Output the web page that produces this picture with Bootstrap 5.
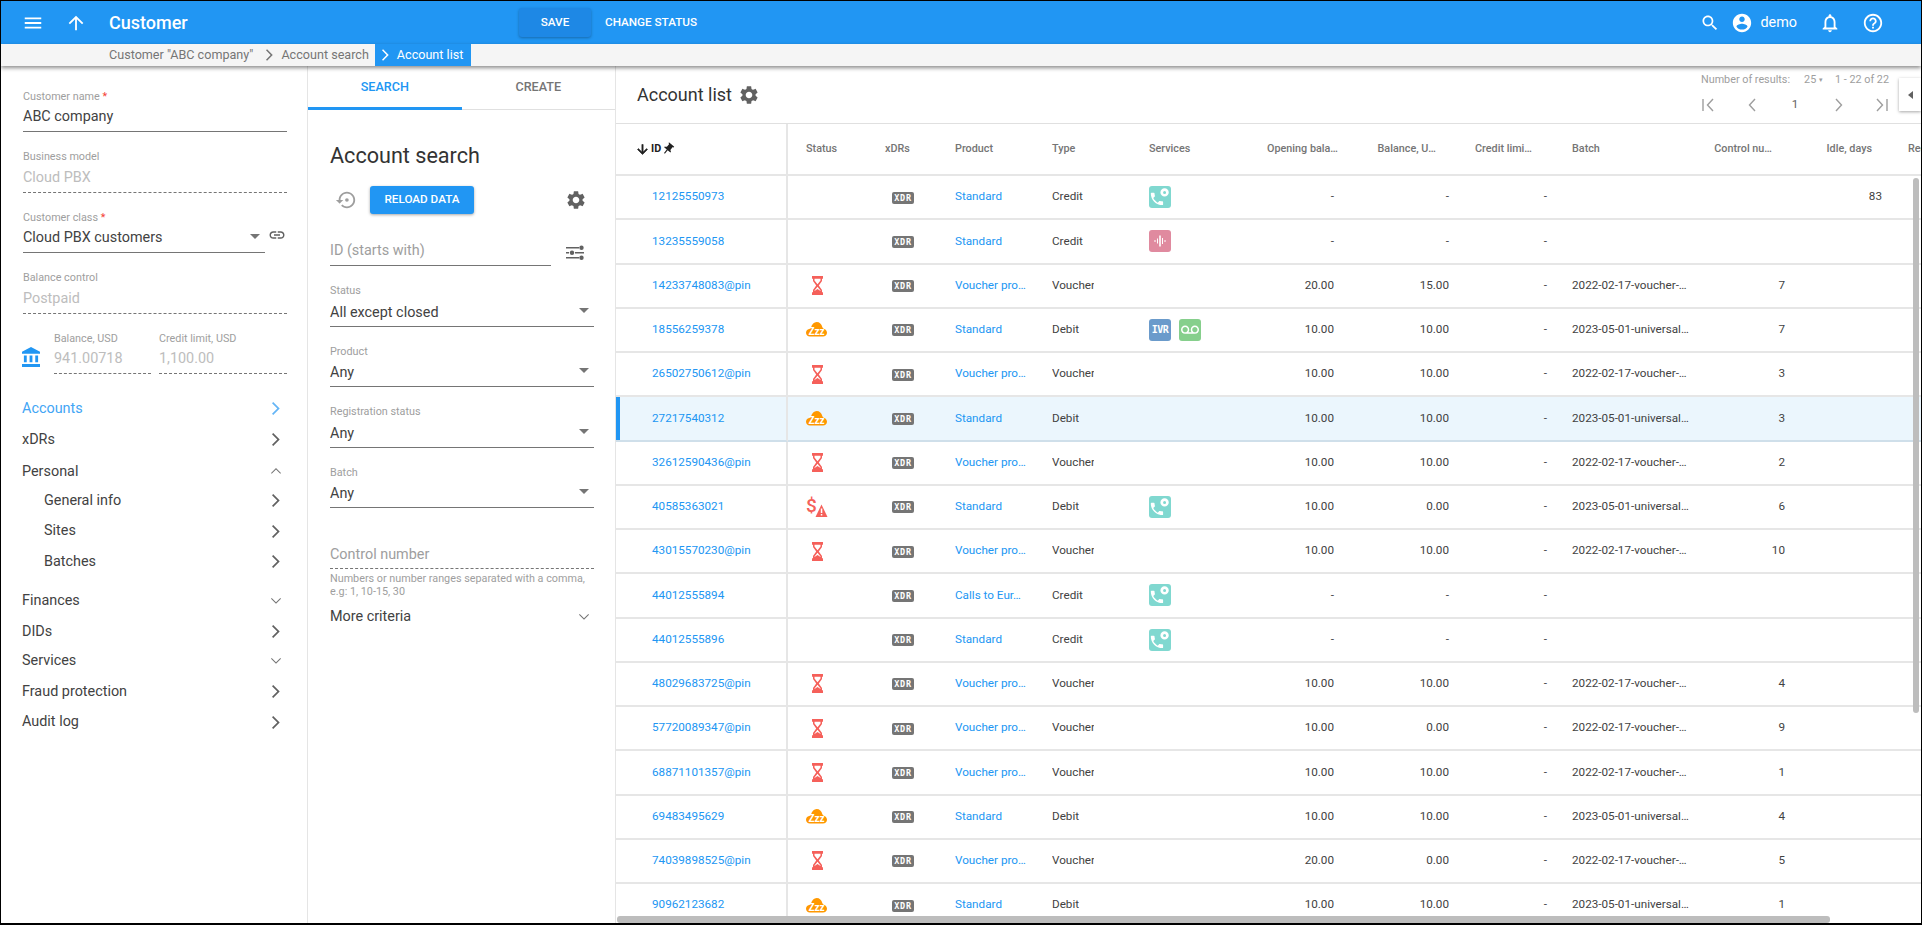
<!DOCTYPE html>
<html lang="en">
<head>
<meta charset="utf-8">
<title>Account list</title>
<link rel="stylesheet" href="https://cdn.jsdelivr.net/npm/bootstrap@5.3.0/dist/css/bootstrap.min.css">
<style>
html,body{height:100%;overflow:hidden}
body{font-family:Roboto,"Liberation Sans",sans-serif;font-size:14.4px;color:#424242;background:#fff}
.frame{height:925px;border:1px solid #000;border-bottom-width:2px;display:flex;flex-direction:column;overflow:hidden}
.ic{display:block;fill:currentColor;flex:none}
.topbar{height:43px;background:#2196f3;color:#fff;padding:0}
.ham{width:22px;height:22px;margin-left:21px}
.upi{width:22px;height:22px;margin-left:21px}
.apptitle{font-size:18px;font-weight:500;margin-left:22px;width:410px}
.savebtn{width:72px;height:29px;margin-top:-1px;background:#1e88e5;color:#fff;font-size:11.7px;font-weight:500;border:0;border-radius:3px;box-shadow:0 1px 3px rgba(0,0,0,.3);padding:1px 0 0}
.chgbtn{color:#fff;font-size:11.7px;font-weight:500;margin-left:14px}
.tops{margin-right:37px;gap:0}
.crumbs{height:22px;background:#f5f5f5;box-shadow:0 2px 4px rgba(0,0,0,.45);position:relative;z-index:5;font-size:12.6px;color:#757575;padding-left:108px}
.crumbs .ch{width:7px;height:12px;margin:0 8px 0 13px}
.crumbon{background:#2196f3;color:#fff;height:22px;padding:0 8px 0 0;margin-left:6px}
.crumbon .ch{margin:0 8px 0 7px}
.mainrow{flex:1;min-height:0}
.leftp{width:307px;flex:none;border-right:1px solid #e5e5e5;padding:20px 20px 0 22px}
.midp{width:308px;flex:none;border-right:1px solid #e5e5e5}
.rightp{flex:1;min-width:0;position:relative;display:flex;flex-direction:column}
.fld{height:46px;margin-bottom:14.6px;border-bottom:1px solid #757575;position:relative}
.fld.dis{border-bottom:1px dashed #757575}
.fld label{display:block;font-size:10.8px;line-height:13px;padding-top:3.5px;height:16.5px;color:#9e9e9e;margin:0;box-sizing:border-box}
.fld .vl{font-size:14.4px;line-height:24px;padding-top:2.5px;color:#424242;white-space:nowrap}
.midin .fld .vl{padding-top:3.5px}
.fld.dis .vl{color:#bdbdbd}
.midin .fld .vl.ph{color:#9e9e9e;padding-top:19px}
.midin .fld.dis .vl.ph{padding-top:20px}
.req{color:#f44336}
.caret{position:absolute;right:5px;bottom:13px;width:0;height:0;border-left:5px solid transparent;border-right:5px solid transparent;border-top:5px solid #757575}
.bal{width:18px;height:22px;margin:18px 14px 0 -1px;color:#2196f3}
.navlist{margin:19px 0 0 -1px}
.nvrow{height:30.7px;color:#424242;padding-right:7px}
.nvrow.on{color:#42a5f5}
.nvrow .cv{width:8px;height:13px;color:#616161}
.nvrow.on .cv{color:#64b5f6}
.nvrow .cs{width:10px;height:6px;color:#757575;margin-right:-1px}
.nvup{margin-top:1.3px}
.nvdn{margin-top:-1.3px}
.subs{margin-top:-1.5px;margin-bottom:8px;padding-left:22px}
.tabsx{height:44px;border-bottom:1px solid #e0e0e0}
.tabx{width:154px;height:44px;font-size:12.6px;font-weight:500;color:#757575;margin-bottom:-1px;padding-bottom:2px}
.tabx.act{color:#2196f3;border-bottom:3px solid #2196f3;padding:1px 0 0}
.midin{padding:0 21px 0 22px}
.hsearch{font-size:21.6px;font-weight:400;line-height:26px;margin:33px 0 17px;color:#333}
.reload{width:104px;height:28px;background:#2196f3;color:#fff;border:0;border-radius:3px;font-size:11.7px;font-weight:500;box-shadow:0 1px 3px rgba(0,0,0,.35);padding:0}
.w221{width:221px}
.help{font-size:10.8px;line-height:13px;color:#9e9e9e;margin-top:-11.5px}
.more{margin-top:7px;line-height:24px;padding-right:5px}
.tbar{height:57px;flex:none}
.ttl{font-size:18px;margin-left:21px;color:#333;line-height:26px}
.pager{width:188px;margin-right:32px;padding-top:7px;font-size:10.8px;color:#9e9e9e}
.pgrow{line-height:14px;white-space:nowrap}
.pgnav{margin-top:8px;height:20px;color:#9e9e9e}
.pgnav svg{width:14px;height:14px;display:block}
.pgnav span{width:14px;text-align:center;color:#616161;font-size:11.7px}
.sidetab{position:absolute;right:0;top:12px;width:22px;height:33px;background:#fff;box-shadow:0 1px 3px rgba(0,0,0,.35)}
.sidetab i{display:block;width:0;height:0;border-top:4.5px solid transparent;border-bottom:4.5px solid transparent;border-right:5px solid #616161}
.twrap{flex:1;min-height:0;overflow:hidden;position:relative;border-top:1px solid #e0e0e0}
.acct.table{width:1312px;table-layout:fixed;border-collapse:separate;border-spacing:0;margin:0;font-size:11.7px;color:#424242}
.acct.table th,.acct.table td{padding:0;vertical-align:middle;border-bottom:2px solid #e6e6e6;white-space:nowrap;overflow:hidden}
.acct.table th{height:52px;font-weight:500;font-size:10.8px;color:#757575}
.acct.table td{height:44.25px}
.acct.table .cid{padding-left:36px;border-right:2px solid #e6e6e6}
.acct.table th.cid{color:#212121;font-weight:700}
.acct.table .cst{padding-left:18px}
.acct.table td.cst{padding-left:0}
.acct.table .cxd{padding-left:14px}
.acct.table td.cxd{padding-left:21px}
.acct.table .cpr{padding-left:14px}
.acct.table .cty{padding-left:14px}
.acct.table .csv{padding-left:13px}
.acct.table .rt{text-align:right}
.acct.table .cbt{padding-left:12px}
.acct.table .cop{padding-right:16px}.acct.table th.cop{padding-right:12px}
.acct.table .cba{padding-right:9px}.acct.table th.cba{padding-right:22px}
.acct.table .ccl{padding-right:13px}.acct.table th.ccl{padding-right:28px}
.acct.table .ccn{padding-right:15px}.acct.table th.ccn{padding-right:28px}
.acct.table .cid2{padding-right:6px}.acct.table th.cid2{padding-right:16px}
.acct.table tr.sel td{background:#ebf6fd;border-bottom-color:#cfdfea}
.acct.table tr.sel td.cid{box-shadow:inset 4px 0 0 #2196f3}
.acct a{color:#2196f3;text-decoration:none}
.vch{display:block;width:42px;overflow:hidden}
.xdrb{display:block;width:22px;height:12px;margin-top:1px;background:#757575;border-radius:2px;color:#fff;font:bold 8.5px/12px "DejaVu Sans Mono",monospace;text-align:center;letter-spacing:.7px}
.st{display:block;margin:0 auto 0 18px}
.hgl{fill:#f5605a;margin-left:24px}
.svc{width:22px;height:22px;border-radius:3px;color:#fff;flex:none}
.svc svg{fill:#fff}
.s-teal{background:#80d8d0}.s-pink{background:#e08a9f}.s-blue{background:#6b9bcb;font:bold 10px/22px "DejaVu Sans Mono",monospace;letter-spacing:-.5px}.s-green{background:#86cf8c}
.vbar{position:absolute;right:2px;top:54px;width:6px;height:535px;border-radius:3px;background:#bdbdbd}
.hbar{position:absolute;left:1px;bottom:0;width:1213px;height:7px;border-radius:3px;background:#bdbdbd}
</style>
</head>
<body>
<svg width="0" height="0" class="position-absolute">
<defs>
<symbol id="gear" viewBox="0 0 24 24"><path d="M19.14 12.94c.04-.3.06-.61.06-.94 0-.32-.02-.64-.07-.94l2.03-1.58c.18-.14.23-.41.12-.61l-1.92-3.32c-.12-.22-.37-.29-.59-.22l-2.39.96c-.5-.38-1.03-.7-1.62-.94l-.36-2.54c-.04-.24-.24-.41-.48-.41h-3.84c-.24 0-.43.17-.47.41l-.36 2.54c-.59.24-1.13.57-1.62.94l-2.39-.96c-.22-.08-.47 0-.59.22L2.74 8.87c-.12.21-.08.47.12.61l2.03 1.58c-.05.3-.09.63-.09.94s.02.64.07.94l-2.03 1.58c-.18.14-.23.41-.12.61l1.92 3.32c.12.22.37.29.59.22l2.39-.96c.5.38 1.03.7 1.62.94l.36 2.54c.05.24.24.41.48.41h3.84c.24 0 .44-.17.47-.41l.36-2.54c.59-.24 1.13-.56 1.62-.94l2.39.96c.22.08.47 0 .59-.22l1.92-3.32c.12-.22.07-.47-.12-.61l-2.01-1.58zM12 15.6c-1.98 0-3.6-1.62-3.6-3.6s1.62-3.6 3.6-3.6 3.6 1.62 3.6 3.6-1.62 3.6-3.6 3.6z"/></symbol>
<symbol id="cr" viewBox="0 0 8 13"><path d="M1.2 0 0 1.2 5.3 6.5 0 11.8 1.2 13 7.7 6.5z"/></symbol>
<symbol id="dn" viewBox="0 0 10 6"><path d="M.7 0 0 .7 5 5.7 10 .7 9.3 0 5 4.3z"/></symbol>
<symbol id="upc" viewBox="0 0 10 6"><path d="M.7 5.7 0 5 5 0 10 5 9.3 5.7 5 1.4z"/></symbol>
<symbol id="hg" viewBox="0 0 11 19"><path fill-rule="evenodd" d="M0 0H11V2.700H10V5L6.800 9.500 10 14V16.300H11V19H0V16.300H1V14L4.200 9.500 1 5V2.700H0ZM2.500 2.700V4.500L5.500 8.200 8.500 4.500V2.700ZM5.500 10.800 2.500 14.500V15L5.500 13 8.500 15V14.500Z"/></symbol>
<symbol id="zz" viewBox="0 0 21 15"><path d="M4 14.500C1.800 14.500 0 12.900 0 10.800 0 9 1.300 7.500 3.100 7.100 4 6.800 4.600 6.200 5 5.400 5.900 2.200 8 0 10.700 0 13.500 0 15.600 2 16.300 5 16.500 5.800 17 6.400 17.700 6.800 19.700 7.400 21 8.900 21 10.800 21 12.900 19.200 14.500 17 14.500z"/></symbol>
<symbol id="phn" viewBox="0 0 24 24"><g transform="translate(-1.500 4.500) scale(.82)"><path d="M6.620 10.790c1.440 2.830 3.760 5.140 6.590 6.590l2.200-2.200c.27-.27.67-.36 1.020-.24 1.120.37 2.330.57 3.570.57.55 0 1 .45 1 1V20c0 .55-.45 1-1 1-9.390 0-17-7.610-17-17 0-.55.45-1 1-1h3.500c.55 0 1 .45 1 1 0 1.250.2 2.450.57 3.570.11.35.03.74-.25 1.020l-2.200 2.200z"/></g><path fill-rule="evenodd" d="M17.500 1.500a5 5 0 0 1 5 5 5 5 0 0 1-5 5 5 5 0 0 1-5-5 5 5 0 0 1 5-5zm0 3.200a1.800 1.800 0 1 0 0 3.600 1.800 1.800 0 0 0 0-3.600z"/></symbol>
</defs>
</svg>
<div class="frame">
  <nav class="navbar topbar flex-nowrap justify-content-start align-items-center">
    <svg class="ic ham" viewBox="0 0 24 24"><path d="M3 18h18v-2H3v2zm0-5h18v-2H3v2zm0-7v2h18V6H3z"/></svg>
    <svg class="ic upi" viewBox="0 0 24 24"><path d="M4 12l1.410 1.410L11 7.830V20h2V7.830l5.580 5.590L20 12l-8-8-8 8z"/></svg>
    <div class="apptitle">Customer</div>
    <button class="btn savebtn" type="button">SAVE</button>
    <span class="chgbtn">CHANGE STATUS</span>
    <div class="d-flex align-items-center ms-auto tops">
      <svg class="ic" width="20" height="20" viewBox="0 0 24 24"><path d="M15.500 14h-.79l-.28-.27C15.410 12.590 16 11.110 16 9.500 16 5.910 13.090 3 9.500 3S3 5.910 3 9.500 5.910 16 9.500 16c1.610 0 3.090-.59 4.230-1.570l.27.28v.79l5 4.990L20.490 19l-4.990-5zm-6 0C7.010 14 5 11.990 5 9.500S7.010 5 9.500 5 14 7.010 14 9.500 11.990 14 9.500 14z"/></svg>
      <svg class="ic" style="margin-left:11px" width="22" height="22" viewBox="0 0 24 24"><path d="M12 2C6.480 2 2 6.480 2 12s4.480 10 10 10 10-4.480 10-10S17.520 2 12 2zm0 3c1.660 0 3 1.340 3 3s-1.340 3-3 3-3-1.340-3-3 1.340-3 3-3zm0 14.200c-2.500 0-4.710-1.280-6-3.220.03-1.990 4-3.080 6-3.080 1.990 0 5.970 1.090 6 3.080-1.290 1.940-3.500 3.220-6 3.220z"/></svg>
      <span style="font-size:14.4px;margin-left:7px">demo</span>
      <svg class="ic" style="margin-left:22px" width="22" height="22" viewBox="0 0 24 24"><path d="M12 22c1.100 0 2-.9 2-2h-4c0 1.100.9 2 2 2zm6-6v-5c0-3.070-1.630-5.640-4.500-6.320V4c0-.83-.67-1.500-1.500-1.500s-1.500.67-1.500 1.500v.68C7.640 5.360 6 7.920 6 11v5l-2 2v1h16v-1l-2-2zm-2 1H8v-6c0-2.480 1.510-4.500 4-4.500s4 2.020 4 4.500v6z"/></svg>
      <svg class="ic" style="margin-left:21px" width="22" height="22" viewBox="0 0 24 24"><path d="M11 18h2v-2h-2v2zm1-16C6.480 2 2 6.480 2 12s4.480 10 10 10 10-4.480 10-10S17.520 2 12 2zm0 18c-4.410 0-8-3.590-8-8s3.590-8 8-8 8 3.590 8 8-3.590 8-8 8zm0-14c-2.210 0-4 1.790-4 4h2c0-1.100.9-2 2-2s2 .9 2 2c0 2-3 1.750-3 5h2c0-2.250 3-2.500 3-5 0-2.210-1.790-4-4-4z"/></svg>
    </div>
  </nav>
  <div class="crumbs d-flex align-items-center">
    <span>Customer "ABC company"</span>
    <svg class="ic ch"><use href="#cr"/></svg>
    <span>Account search</span>
    <div class="crumbon d-flex align-items-center"><svg class="ic ch"><use href="#cr"/></svg><span>Account list</span></div>
  </div>
  <div class="d-flex mainrow">
    <aside class="leftp">
      <div class="fld"><label>Customer name <span class="req">*</span></label><div class="vl">ABC company</div></div>
      <div class="fld dis"><label>Business model</label><div class="vl">Cloud PBX</div></div>
      <div class="d-flex">
        <div class="fld flex-grow-1"><label>Customer class <span class="req">*</span></label><div class="vl">Cloud PBX customers</div><span class="caret"></span></div>
        <svg class="ic" style="margin:19px 1px 0 3px;color:#616161" width="18" height="18" viewBox="0 0 24 24"><path d="M3.900 12c0-1.710 1.390-3.100 3.100-3.100h4V7H7c-2.760 0-5 2.240-5 5s2.240 5 5 5h4v-1.900H7c-1.710 0-3.100-1.390-3.100-3.100zM8 13h8v-2H8v2zm9-6h-4v1.900h4c1.710 0 3.100 1.390 3.100 3.100s-1.390 3.100-3.100 3.100h-4V17h4c2.760 0 5-2.240 5-5s-2.240-5-5-5z"/></svg>
      </div>
      <div class="fld dis"><label>Balance control</label><div class="vl">Postpaid</div></div>
      <div class="d-flex">
        <svg class="ic bal" viewBox="2 1 19 21"><path d="M4 10v7h3v-7H4zm6 0v7h3v-7h-3zM2 22h19v-3H2v3zm14-12v7h3v-7h-3zm-4.500-9L2 6v2h19V6l-9.500-5z"/></svg>
        <div class="fld dis m-0" style="width:97px"><label>Balance, USD</label><div class="vl">941.00718</div></div>
        <div class="fld dis m-0 ms-2 flex-grow-1"><label>Credit limit, USD</label><div class="vl">1,100.00</div></div>
      </div>
      <div class="navlist">
        <div class="nvrow on d-flex align-items-center justify-content-between"><span>Accounts</span><svg class="ic cv"><use href="#cr"/></svg></div>
        <div class="nvrow d-flex align-items-center justify-content-between"><span>xDRs</span><svg class="ic cv"><use href="#cr"/></svg></div>
        <div class="nvrow nvup d-flex align-items-center justify-content-between"><span>Personal</span><svg class="ic cs"><use href="#upc"/></svg></div>
        <div class="subs">
          <div class="nvrow d-flex align-items-center justify-content-between"><span>General info</span><svg class="ic cv"><use href="#cr"/></svg></div>
          <div class="nvrow d-flex align-items-center justify-content-between"><span>Sites</span><svg class="ic cv"><use href="#cr"/></svg></div>
          <div class="nvrow d-flex align-items-center justify-content-between"><span>Batches</span><svg class="ic cv"><use href="#cr"/></svg></div>
        </div>
        <div class="nvrow d-flex align-items-center justify-content-between"><span>Finances</span><svg class="ic cs"><use href="#dn"/></svg></div>
        <div class="nvrow d-flex align-items-center justify-content-between"><span>DIDs</span><svg class="ic cv"><use href="#cr"/></svg></div>
        <div class="nvrow nvdn d-flex align-items-center justify-content-between"><span>Services</span><svg class="ic cs"><use href="#dn"/></svg></div>
        <div class="nvrow d-flex align-items-center justify-content-between"><span>Fraud protection</span><svg class="ic cv"><use href="#cr"/></svg></div>
        <div class="nvrow d-flex align-items-center justify-content-between"><span>Audit log</span><svg class="ic cv"><use href="#cr"/></svg></div>
      </div>
    </aside>
    <section class="midp">
      <div class="d-flex tabsx">
        <div class="tabx act d-flex align-items-center justify-content-center">SEARCH</div>
        <div class="tabx d-flex align-items-center justify-content-center">CREATE</div>
      </div>
      <div class="midin">
        <h2 class="hsearch">Account search</h2>
        <div class="d-flex align-items-center justify-content-between" style="padding-right:7px">
          <div class="d-flex align-items-center">
            <svg class="ic" style="margin-left:5px;color:#9e9e9e" width="22" height="22" viewBox="0 0 24 24"><path d="M13 3c-4.970 0-9 4.030-9 9H1l3.890 3.890.07.14L9 12H6c0-3.870 3.130-7 7-7s7 3.130 7 7-3.130 7-7 7c-1.930 0-3.680-.79-4.940-2.060l-1.420 1.420C8.270 19.990 10.510 21 13 21c4.970 0 9-4.030 9-9s-4.030-9-9-9z"/><circle cx="13" cy="12" r="2"/></svg>
            <button class="btn reload" style="margin-left:13px" type="button">RELOAD DATA</button>
          </div>
          <svg class="ic" style="color:#616161" width="22" height="22"><use href="#gear"/></svg>
        </div>
        <div class="d-flex" style="margin-top:6px">
          <div class="fld w221"><div class="vl ph">ID (starts with)</div></div>
          <svg class="ic" style="margin:24px 0 0 14px;color:#616161" width="20" height="18" viewBox="0 0 20 18"><path d="M1 3h13v1.500H1zM1 8h3v1.500H1zM10 8h9v1.500h-9zM1 13h13v1.500H1z"/><circle cx="16.500" cy="3.700" r="2.200"/><circle cx="7" cy="8.700" r="2.200"/><circle cx="16.500" cy="13.700" r="2.200"/></svg>
        </div>
        <div class="fld"><label>Status</label><div class="vl">All except closed</div><span class="caret"></span></div>
        <div class="fld"><label>Product</label><div class="vl">Any</div><span class="caret"></span></div>
        <div class="fld"><label>Registration status</label><div class="vl">Any</div><span class="caret"></span></div>
        <div class="fld"><label>Batch</label><div class="vl">Any</div><span class="caret"></span></div>
        <div class="fld dis"><div class="vl ph">Control number</div></div>
        <div class="help">Numbers or number ranges separated with a comma, e.g: 1, 10-15, 30</div>
        <div class="more d-flex align-items-center justify-content-between"><span>More criteria</span><svg class="ic" style="color:#757575" width="10" height="6"><use href="#dn"/></svg></div>
      </div>
    </section>
    <section class="rightp">
      <div class="tbar d-flex align-items-center justify-content-between">
        <div class="d-flex align-items-center"><span class="ttl">Account list</span><svg class="ic" style="color:#616161;margin-left:6px" width="22" height="22"><use href="#gear"/></svg></div>
        <div class="pager align-self-start">
          <div class="pgrow d-flex justify-content-between"><span>Number of results:</span><span style="margin-left:14px">25 <span style="font-size:7px;vertical-align:1px">&#9662;</span></span><span style="margin-left:12px">1 - 22 of 22</span></div>
          <div class="pgnav d-flex justify-content-between align-items-center">
            <svg viewBox="0 0 14 14" fill="none" stroke="currentColor" stroke-width="1.400"><path d="M2 1v12M12 1 6.500 7 12 13"/></svg>
            <svg viewBox="0 0 14 14" fill="none" stroke="currentColor" stroke-width="1.400"><path d="M10 1 4.500 7 10 13"/></svg>
            <span>1</span>
            <svg viewBox="0 0 14 14" fill="none" stroke="currentColor" stroke-width="1.400"><path d="M4 1 9.500 7 4 13"/></svg>
            <svg viewBox="0 0 14 14" fill="none" stroke="currentColor" stroke-width="1.400"><path d="M12 1v12M2 1 7.500 7 2 13"/></svg>
          </div>
        </div>
      </div>
      <div class="sidetab d-flex align-items-center justify-content-center"><i></i></div>
      <div class="twrap">
        <table class="table acct">
          <colgroup><col style="width:172px"><col style="width:83px"><col style="width:70px"><col style="width:97px"><col style="width:98px"><col style="width:114px"><col style="width:100px"><col style="width:108px"><col style="width:102px"><col style="width:140px"><col style="width:100px"><col style="width:88px"><col style="width:40px"></colgroup>
          <thead><tr>
            <th class="cid" style="padding-left:19px"><div class="d-flex align-items-center"><svg class="ic" style="color:#212121;margin-right:1px" width="15" height="15" viewBox="0 0 24 24"><path d="M20 12l-1.410-1.410L13 16.170V4h-2v12.170l-5.580-5.590L4 12l8 8 8-8z" stroke="#212121"/></svg><span>ID</span><svg class="ic" style="color:#212121;transform:rotate(40deg)" width="14" height="14" viewBox="0 0 24 24"><path d="M16 9V4h1c.55 0 1-.45 1-1s-.45-1-1-1H7c-.55 0-1 .45-1 1s.45 1 1 1h1v5c0 1.660-1.340 3-3 3v2h5.970v7l1 1 1-1v-7H19v-2c-1.660 0-3-1.340-3-3z"/></svg></div></th>
            <th class="cst">Status</th><th class="cxd">xDRs</th><th class="cpr">Product</th><th class="cty">Type</th><th class="csv">Services</th>
            <th class="rt cop">Opening bala…</th><th class="rt cba">Balance, U…</th><th class="rt ccl">Credit limi…</th><th class="cbt">Batch</th><th class="rt ccn">Control nu…</th><th class="rt cid2">Idle, days</th><th style="padding-left:20px">Registration</th>
          </tr></thead>
          <tbody>
            <tr><td class="cid"><a href="#">12125550973</a></td><td class="cst"></td><td class="cxd"><span class="xdrb">XDR</span></td><td class="cpr"><a href="#">Standard</a></td><td class="cty">Credit</td><td class="csv"><div class="d-flex"><span class="svc s-teal d-flex align-items-center justify-content-center"><svg width="20" height="20"><use href="#phn"/></svg></span></div></td><td class="rt cop">-</td><td class="rt cba">-</td><td class="rt ccl">-</td><td class="cbt"></td><td class="rt ccn"></td><td class="rt cid2">83</td><td></td></tr>
            <tr><td class="cid"><a href="#">13235559058</a></td><td class="cst"></td><td class="cxd"><span class="xdrb">XDR</span></td><td class="cpr"><a href="#">Standard</a></td><td class="cty">Credit</td><td class="csv"><div class="d-flex"><span class="svc s-pink d-flex align-items-center justify-content-center"><svg width="14" height="14" viewBox="0 0 14 14"><path d="M1.500 6h1v2h-1zM4 4.500h1v5H4zM6.200 1.500h1.600v11H6.200zM9 4h1v6H9zM11.500 6h1v2h-1z"/></svg></span></div></td><td class="rt cop">-</td><td class="rt cba">-</td><td class="rt ccl">-</td><td class="cbt"></td><td class="rt ccn"></td><td class="rt cid2"></td><td></td></tr>
            <tr><td class="cid"><a href="#">14233748083@pin</a></td><td class="cst"><svg class="st hgl" width="11" height="19"><use href="#hg"/></svg></td><td class="cxd"><span class="xdrb">XDR</span></td><td class="cpr"><a href="#">Voucher pro…</a></td><td class="cty"><span class="vch">Voucher</span></td><td class="csv"></td><td class="rt cop">20.00</td><td class="rt cba">15.00</td><td class="rt ccl">-</td><td class="cbt">2022-02-17-voucher-…</td><td class="rt ccn">7</td><td class="rt cid2"></td><td></td></tr>
            <tr><td class="cid"><a href="#">18556259378</a></td><td class="cst"><svg class="st" viewBox="0 0 21 15" width="21" height="15"><use href="#zz" fill="#ff9800"/><text x="10.500" y="12.500" text-anchor="middle" font-family="Roboto" font-weight="700" font-size="10" fill="#fff">Zzz</text></svg></td><td class="cxd"><span class="xdrb">XDR</span></td><td class="cpr"><a href="#">Standard</a></td><td class="cty">Debit</td><td class="csv"><div class="d-flex gap-2"><span class="svc s-blue text-center">IVR</span><span class="svc s-green d-flex align-items-center justify-content-center"><svg width="18" height="18" viewBox="0 0 24 24"><path d="M18.500 6C15.460 6 13 8.460 13 11.500c0 1.330.47 2.550 1.260 3.500H9.740C10.530 14.050 11 12.830 11 11.500 11 8.460 8.540 6 5.500 6S0 8.460 0 11.500 2.460 17 5.500 17h13c3.040 0 5.500-2.460 5.500-5.500S21.540 6 18.500 6zm-13 9C3.570 15 2 13.430 2 11.500S3.570 8 5.500 8 9 9.570 9 11.500 7.430 15 5.500 15zm13 0c-1.930 0-3.500-1.570-3.500-3.500S16.570 8 18.500 8 22 9.570 22 11.500 20.430 15 18.500 15z"/></svg></span></div></td><td class="rt cop">10.00</td><td class="rt cba">10.00</td><td class="rt ccl">-</td><td class="cbt">2023-05-01-universal…</td><td class="rt ccn">7</td><td class="rt cid2"></td><td></td></tr>
            <tr><td class="cid"><a href="#">26502750612@pin</a></td><td class="cst"><svg class="st hgl" width="11" height="19"><use href="#hg"/></svg></td><td class="cxd"><span class="xdrb">XDR</span></td><td class="cpr"><a href="#">Voucher pro…</a></td><td class="cty"><span class="vch">Voucher</span></td><td class="csv"></td><td class="rt cop">10.00</td><td class="rt cba">10.00</td><td class="rt ccl">-</td><td class="cbt">2022-02-17-voucher-…</td><td class="rt ccn">3</td><td class="rt cid2"></td><td></td></tr>
            <tr class="sel"><td class="cid"><a href="#">27217540312</a></td><td class="cst"><svg class="st" viewBox="0 0 21 15" width="21" height="15"><use href="#zz" fill="#ff9800"/><text x="10.500" y="12.500" text-anchor="middle" font-family="Roboto" font-weight="700" font-size="10" fill="#fff">Zzz</text></svg></td><td class="cxd"><span class="xdrb">XDR</span></td><td class="cpr"><a href="#">Standard</a></td><td class="cty">Debit</td><td class="csv"></td><td class="rt cop">10.00</td><td class="rt cba">10.00</td><td class="rt ccl">-</td><td class="cbt">2023-05-01-universal…</td><td class="rt ccn">3</td><td class="rt cid2"></td><td></td></tr>
            <tr><td class="cid"><a href="#">32612590436@pin</a></td><td class="cst"><svg class="st hgl" width="11" height="19"><use href="#hg"/></svg></td><td class="cxd"><span class="xdrb">XDR</span></td><td class="cpr"><a href="#">Voucher pro…</a></td><td class="cty"><span class="vch">Voucher</span></td><td class="csv"></td><td class="rt cop">10.00</td><td class="rt cba">10.00</td><td class="rt ccl">-</td><td class="cbt">2022-02-17-voucher-…</td><td class="rt ccn">2</td><td class="rt cid2"></td><td></td></tr>
            <tr><td class="cid"><a href="#">40585363021</a></td><td class="cst"><svg class="st" viewBox="0 0 22 22" width="22" height="22"><text x="0" y="16" font-family="Roboto" font-weight="500" font-size="19" fill="#f5605a">$</text><path d="M15.500 8.500 21.500 21H9.500z" fill="#f5605a"/><path d="M14.800 12.500h1.500v4.500h-1.500zM14.800 18h1.500v1.500h-1.500z" fill="#fff"/></svg></td><td class="cxd"><span class="xdrb">XDR</span></td><td class="cpr"><a href="#">Standard</a></td><td class="cty">Debit</td><td class="csv"><div class="d-flex"><span class="svc s-teal d-flex align-items-center justify-content-center"><svg width="20" height="20"><use href="#phn"/></svg></span></div></td><td class="rt cop">10.00</td><td class="rt cba">0.00</td><td class="rt ccl">-</td><td class="cbt">2023-05-01-universal…</td><td class="rt ccn">6</td><td class="rt cid2"></td><td></td></tr>
            <tr><td class="cid"><a href="#">43015570230@pin</a></td><td class="cst"><svg class="st hgl" width="11" height="19"><use href="#hg"/></svg></td><td class="cxd"><span class="xdrb">XDR</span></td><td class="cpr"><a href="#">Voucher pro…</a></td><td class="cty"><span class="vch">Voucher</span></td><td class="csv"></td><td class="rt cop">10.00</td><td class="rt cba">10.00</td><td class="rt ccl">-</td><td class="cbt">2022-02-17-voucher-…</td><td class="rt ccn">10</td><td class="rt cid2"></td><td></td></tr>
            <tr><td class="cid"><a href="#">44012555894</a></td><td class="cst"></td><td class="cxd"><span class="xdrb">XDR</span></td><td class="cpr"><a href="#">Calls to Eur…</a></td><td class="cty">Credit</td><td class="csv"><div class="d-flex"><span class="svc s-teal d-flex align-items-center justify-content-center"><svg width="20" height="20"><use href="#phn"/></svg></span></div></td><td class="rt cop">-</td><td class="rt cba">-</td><td class="rt ccl">-</td><td class="cbt"></td><td class="rt ccn"></td><td class="rt cid2"></td><td></td></tr>
            <tr><td class="cid"><a href="#">44012555896</a></td><td class="cst"></td><td class="cxd"><span class="xdrb">XDR</span></td><td class="cpr"><a href="#">Standard</a></td><td class="cty">Credit</td><td class="csv"><div class="d-flex"><span class="svc s-teal d-flex align-items-center justify-content-center"><svg width="20" height="20"><use href="#phn"/></svg></span></div></td><td class="rt cop">-</td><td class="rt cba">-</td><td class="rt ccl">-</td><td class="cbt"></td><td class="rt ccn"></td><td class="rt cid2"></td><td></td></tr>
            <tr><td class="cid"><a href="#">48029683725@pin</a></td><td class="cst"><svg class="st hgl" width="11" height="19"><use href="#hg"/></svg></td><td class="cxd"><span class="xdrb">XDR</span></td><td class="cpr"><a href="#">Voucher pro…</a></td><td class="cty"><span class="vch">Voucher</span></td><td class="csv"></td><td class="rt cop">10.00</td><td class="rt cba">10.00</td><td class="rt ccl">-</td><td class="cbt">2022-02-17-voucher-…</td><td class="rt ccn">4</td><td class="rt cid2"></td><td></td></tr>
            <tr><td class="cid"><a href="#">57720089347@pin</a></td><td class="cst"><svg class="st hgl" width="11" height="19"><use href="#hg"/></svg></td><td class="cxd"><span class="xdrb">XDR</span></td><td class="cpr"><a href="#">Voucher pro…</a></td><td class="cty"><span class="vch">Voucher</span></td><td class="csv"></td><td class="rt cop">10.00</td><td class="rt cba">0.00</td><td class="rt ccl">-</td><td class="cbt">2022-02-17-voucher-…</td><td class="rt ccn">9</td><td class="rt cid2"></td><td></td></tr>
            <tr><td class="cid"><a href="#">68871101357@pin</a></td><td class="cst"><svg class="st hgl" width="11" height="19"><use href="#hg"/></svg></td><td class="cxd"><span class="xdrb">XDR</span></td><td class="cpr"><a href="#">Voucher pro…</a></td><td class="cty"><span class="vch">Voucher</span></td><td class="csv"></td><td class="rt cop">10.00</td><td class="rt cba">10.00</td><td class="rt ccl">-</td><td class="cbt">2022-02-17-voucher-…</td><td class="rt ccn">1</td><td class="rt cid2"></td><td></td></tr>
            <tr><td class="cid"><a href="#">69483495629</a></td><td class="cst"><svg class="st" viewBox="0 0 21 15" width="21" height="15"><use href="#zz" fill="#ff9800"/><text x="10.500" y="12.500" text-anchor="middle" font-family="Roboto" font-weight="700" font-size="10" fill="#fff">Zzz</text></svg></td><td class="cxd"><span class="xdrb">XDR</span></td><td class="cpr"><a href="#">Standard</a></td><td class="cty">Debit</td><td class="csv"></td><td class="rt cop">10.00</td><td class="rt cba">10.00</td><td class="rt ccl">-</td><td class="cbt">2023-05-01-universal…</td><td class="rt ccn">4</td><td class="rt cid2"></td><td></td></tr>
            <tr><td class="cid"><a href="#">74039898525@pin</a></td><td class="cst"><svg class="st hgl" width="11" height="19"><use href="#hg"/></svg></td><td class="cxd"><span class="xdrb">XDR</span></td><td class="cpr"><a href="#">Voucher pro…</a></td><td class="cty"><span class="vch">Voucher</span></td><td class="csv"></td><td class="rt cop">20.00</td><td class="rt cba">0.00</td><td class="rt ccl">-</td><td class="cbt">2022-02-17-voucher-…</td><td class="rt ccn">5</td><td class="rt cid2"></td><td></td></tr>
            <tr><td class="cid"><a href="#">90962123682</a></td><td class="cst"><svg class="st" viewBox="0 0 21 15" width="21" height="15"><use href="#zz" fill="#ff9800"/><text x="10.500" y="12.500" text-anchor="middle" font-family="Roboto" font-weight="700" font-size="10" fill="#fff">Zzz</text></svg></td><td class="cxd"><span class="xdrb">XDR</span></td><td class="cpr"><a href="#">Standard</a></td><td class="cty">Debit</td><td class="csv"></td><td class="rt cop">10.00</td><td class="rt cba">10.00</td><td class="rt ccl">-</td><td class="cbt">2023-05-01-universal…</td><td class="rt ccn">1</td><td class="rt cid2"></td><td></td></tr>
          </tbody>
        </table>
        <div class="vbar"></div>
        <div class="hbar"></div>
      </div>
    </section>
  </div>
</div>
</body>
</html>
